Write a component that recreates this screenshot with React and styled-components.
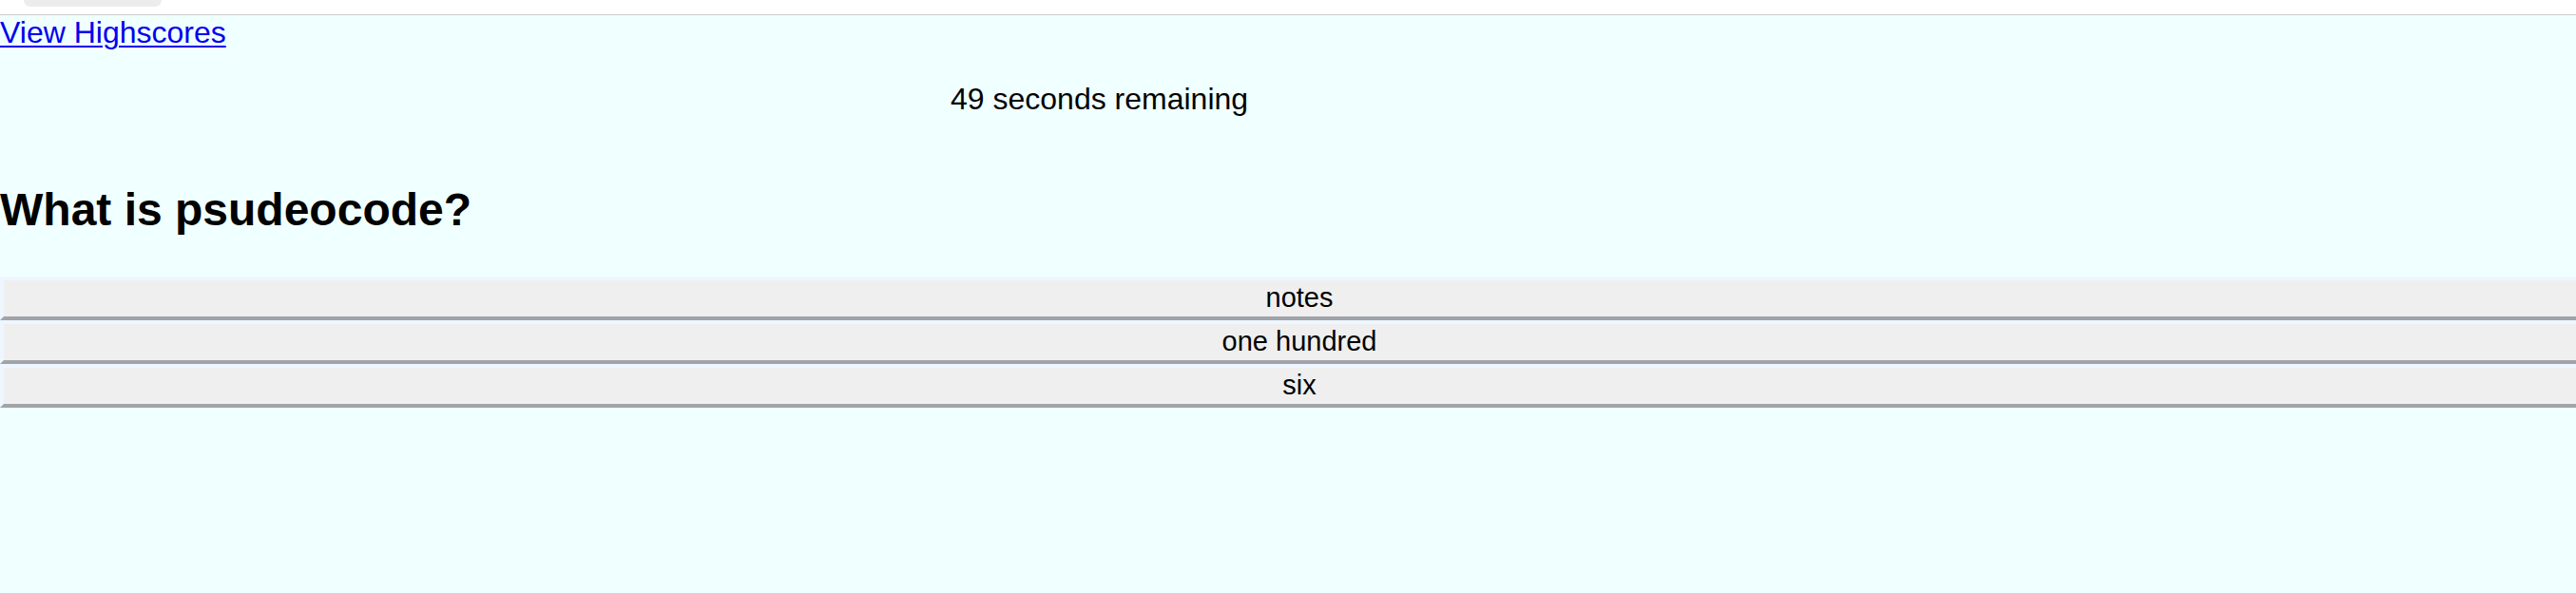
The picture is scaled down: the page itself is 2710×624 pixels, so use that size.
import React from "react";
import styled, { createGlobalStyle } from "styled-components";

const GlobalStyle = createGlobalStyle`
  html, body {
    margin: 0;
    padding: 0;
    background: #f0ffff;
  }
  body {
    font-family: "Liberation Sans", Arial, sans-serif;
    color: #000;
  }
`;

const TopBar = styled.div`
  height: 15px;
  background: #fff;
  border-bottom: 1px solid #cccccc;
  padding-left: 25px;
`;

const Tab = styled.div`
  width: 145px;
  height: 7px;
  background: #ececec;
  border-radius: 0 0 8px 8px;
`;

const HighscoreLink = styled.a`
  display: inline-block;
  font-size: 32px;
  line-height: 36.8px;
  color: #0000ee;
  text-decoration: underline;
  text-decoration-thickness: 2px;
  text-underline-offset: 3px;
`;

const Timer = styled.p`
  margin: 33px 0 0;
  padding-left: 1000px;
  font-size: 32px;
  line-height: 36.8px;
`;

const Question = styled.h2`
  margin: 70px 0 43px;
  font-size: 48px;
  line-height: 55.2px;
  font-weight: bold;
`;

const Choices = styled.div`
  display: flex;
  flex-direction: column;
`;

const ChoiceButton = styled.button`
  display: block;
  box-sizing: border-box;
  width: 100%;
  height: 46px;
  margin: 0;
  padding: 0 0 0 20px;
  background: #efefef;
  border-style: solid;
  border-width: 4px 0 4px 4px;
  border-color: #eef6ff #eef6ff #a0a4a8 #eef6ff;
  font-family: "Liberation Sans", Arial, sans-serif;
  font-size: 29px;
  line-height: 33px;
  color: #000;
  text-align: center;
  cursor: pointer;
`;

const choices = ["notes", "one hundred", "six"];

export default function App() {
  return (
    <>
      <GlobalStyle />
      <TopBar>
        <Tab />
      </TopBar>
      <HighscoreLink href="#highscores">View Highscores</HighscoreLink>
      <Timer>49 seconds remaining</Timer>
      <Question>What is psudeocode?</Question>
      <Choices>
        {choices.map((c) => (
          <ChoiceButton key={c}>{c}</ChoiceButton>
        ))}
      </Choices>
    </>
  );
}
